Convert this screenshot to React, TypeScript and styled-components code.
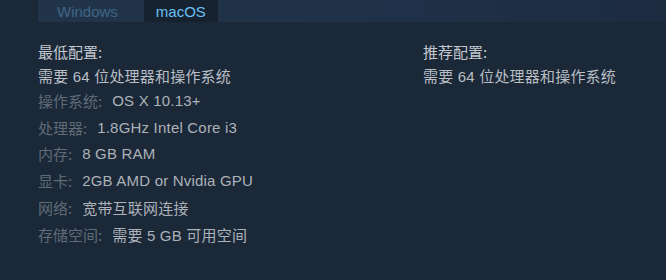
import React from 'react';
import styled, { createGlobalStyle } from 'styled-components';

const GlobalStyle = createGlobalStyle`
  html, body {
    margin: 0;
    padding: 0;
    background: #1b2838;
  }
  body {
    font-family: "Liberation Sans", Arial, "Noto Sans CJK SC", sans-serif;
    font-size: 15px;
  }
`;

const Page = styled.div`
  width: 666px;
  height: 280px;
  background: #1b2838;
  padding-left: 38px;
  box-sizing: border-box;
  overflow: hidden;
`;

const TabStrip = styled.div`
  display: flex;
  gap: 14px;
  height: 22px;
  padding-left: 7px;
  background: linear-gradient(90deg, #213449 0%, #1f3148 60%, #1c2b40 100%);
`;

const Tab = styled.div<{ $active?: boolean }>`
  display: flex;
  align-items: center;
  padding: 0 12px;
  font-size: 15px;
  color: ${(p) => (p.$active ? '#67c1f5' : '#3f6585')};
  background: ${(p) => (p.$active ? '#172231' : 'transparent')};
`;

const Columns = styled.div`
  display: grid;
  grid-template-columns: 385px 1fr;
  padding-top: 17px;
`;

const Col = styled.div`
  display: flex;
  flex-direction: column;
`;

const Heading = styled.div`
  font-family: "Noto Sans CJK SC", sans-serif;
  color: #c3c9ce;
  height: 25px;
  display: flex;
  align-items: center;
`;

const Note = styled.div`
  color: #b8bec3;
  height: 23px;
  display: flex;
  align-items: center;
  white-space: pre;
  letter-spacing: 0.2px;
`;

const List = styled.ul`
  list-style: none;
  margin: 0;
  padding: 0;
`;

const Item = styled.li`
  display: flex;
  align-items: center;
  height: 26.8px;
  color: #acb2b8;
  white-space: pre;
  letter-spacing: 0.2px;
`;

const Label = styled.span`
  font-family: "Noto Sans CJK SC", sans-serif;
  color: #5f6b76;
  margin-right: 10px;
  letter-spacing: 0;
`;

const specs: [string, string][] = [
  ['操作系统', 'OS X 10.13+'],
  ['处理器', '1.8GHz Intel Core i3'],
  ['内存', '8 GB RAM'],
  ['显卡', '2GB AMD or Nvidia GPU'],
  ['网络', '宽带互联网连接'],
  ['存储空间', '需要 5 GB 可用空间'],
];

const App = (): React.ReactElement => {
  return (
    <Page>
      <GlobalStyle />
      <TabStrip>
        <Tab>Windows</Tab>
        <Tab $active>macOS</Tab>
      </TabStrip>
      <Columns>
        <Col>
          <Heading>最低配置:</Heading>
          <Note>需要 64 位处理器和操作系统</Note>
          <List>
            {specs.map(([k, v]) => (
              <Item key={k}>
                <Label>{k}:</Label>
                {v}
              </Item>
            ))}
          </List>
        </Col>
        <Col>
          <Heading>推荐配置:</Heading>
          <Note>需要 64 位处理器和操作系统</Note>
        </Col>
      </Columns>
    </Page>
  );
};

export default App;
